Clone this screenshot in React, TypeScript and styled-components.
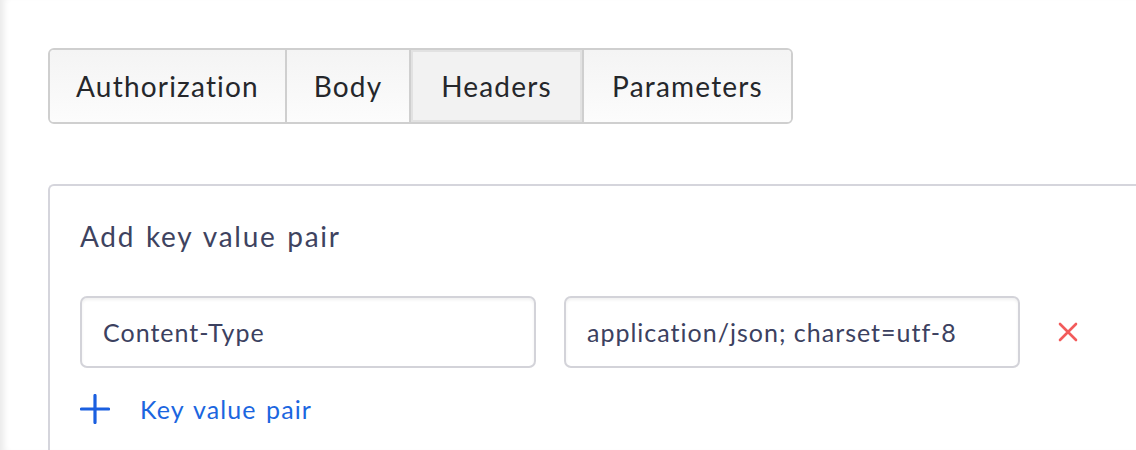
import React from "react";
import styled, { createGlobalStyle } from "styled-components";

const GlobalStyle = createGlobalStyle`
  html, body {
    margin: 0;
    background: #ffffff;
    font-family: "Lato", "Noto Sans", sans-serif;
  }
`;

const Page = styled.div`
  min-height: 450px;
  box-sizing: border-box;
  padding: 48px 0 0 48px;
  box-shadow: inset 8px 0 6px -4px #ebebeb;
  overflow: hidden;
`;

const TabGroup = styled.div`
  display: inline-flex;
  height: 76px;
  box-sizing: border-box;
  border: 2px solid #cfcfcf;
  border-radius: 6px;
  overflow: hidden;
`;

const Tab = styled.button<{ $active?: boolean; $width: number }>`
  box-sizing: border-box;
  width: ${({ $width }) => $width}px;
  border: none;
  border-left: 2px solid #cfcfcf;
  &:first-child {
    border-left: none;
  }
  padding: 0;
  font-family: inherit;
  font-size: 28px;
  letter-spacing: 1.2px;
  color: #25272b;
  cursor: pointer;
  background: ${({ $active }) =>
    $active ? "#f2f2f2" : "linear-gradient(#f4f4f4, #fcfcfc)"};
  box-shadow: ${({ $active }) =>
    $active ? "inset 0 0 0 2px #e2e2e2" : "none"};
`;

const Panel = styled.section`
  margin-top: 60px;
  margin-right: -10px;
  margin-bottom: -20px;
  border: 2px solid #d5d5dc;
  border-right: none;
  border-radius: 6px 0 0 0;
  padding: 34px 0 40px 30px;
`;

const PanelTitle = styled.h2`
  margin: 0;
  font-size: 28px;
  font-weight: 400;
  letter-spacing: 1.7px;
  word-spacing: 2px;
  color: #3e4360;
  line-height: 32px;
`;

const PairRow = styled.div`
  display: flex;
  align-items: center;
  margin-top: 44px;
`;

const Field = styled.input`
  width: 456px;
  height: 72px;
  box-sizing: border-box;
  border: 2px solid #d3d3d9;
  border-radius: 7px;
  box-shadow: inset 0 2px 3px rgba(0, 0, 0, 0.06);
  padding: 0 21px;
  font-family: inherit;
  font-size: 25px;
  letter-spacing: 1px;
  color: #3c4160;
  outline: none;
  & + & {
    margin-left: 28px;
  }
`;

const RemoveButton = styled.button`
  margin-left: 36px;
  width: 24px;
  height: 24px;
  padding: 0;
  border: none;
  background: none;
  display: flex;
  align-items: center;
  justify-content: center;
  cursor: pointer;
`;

const AddButton = styled.button`
  display: flex;
  align-items: center;
  gap: 30px;
  margin-top: 26px;
  padding: 0;
  border: none;
  background: none;
  font-family: inherit;
  font-size: 25px;
  letter-spacing: 1.1px;
  word-spacing: 2px;
  color: #1b66e0;
  cursor: pointer;
`;

const tabs = [
  { label: "Authorization", width: 235 },
  { label: "Body", width: 124 },
  { label: "Headers", width: 173 },
  { label: "Parameters", width: 209 },
];

export default function App() {
  return (
    <>
      <GlobalStyle />
      <Page>
        <TabGroup>
          {tabs.map((t) => (
            <Tab key={t.label} $width={t.width} $active={t.label === "Headers"}>
              {t.label}
            </Tab>
          ))}
        </TabGroup>
        <Panel>
          <PanelTitle>Add key value pair</PanelTitle>
          <PairRow>
            <Field defaultValue="Content-Type" />
            <Field defaultValue="application/json; charset=utf-8" />
            <RemoveButton aria-label="Remove">
              <svg width="20" height="20" viewBox="0 0 20 20">
                <path
                  d="M2 2 L18 18 M18 2 L2 18"
                  stroke="#f25b5b"
                  strokeWidth="2.6"
                  strokeLinecap="round"
                />
              </svg>
            </RemoveButton>
          </PairRow>
          <AddButton>
            <svg width="30" height="30" viewBox="0 0 30 30">
              <path
                d="M15 1.5 V28.5 M1.5 15 H28.5"
                stroke="#1a5fe0"
                strokeWidth="3.2"
                strokeLinecap="round"
              />
            </svg>
            Key value pair
          </AddButton>
        </Panel>
      </Page>
    </>
  );
}
